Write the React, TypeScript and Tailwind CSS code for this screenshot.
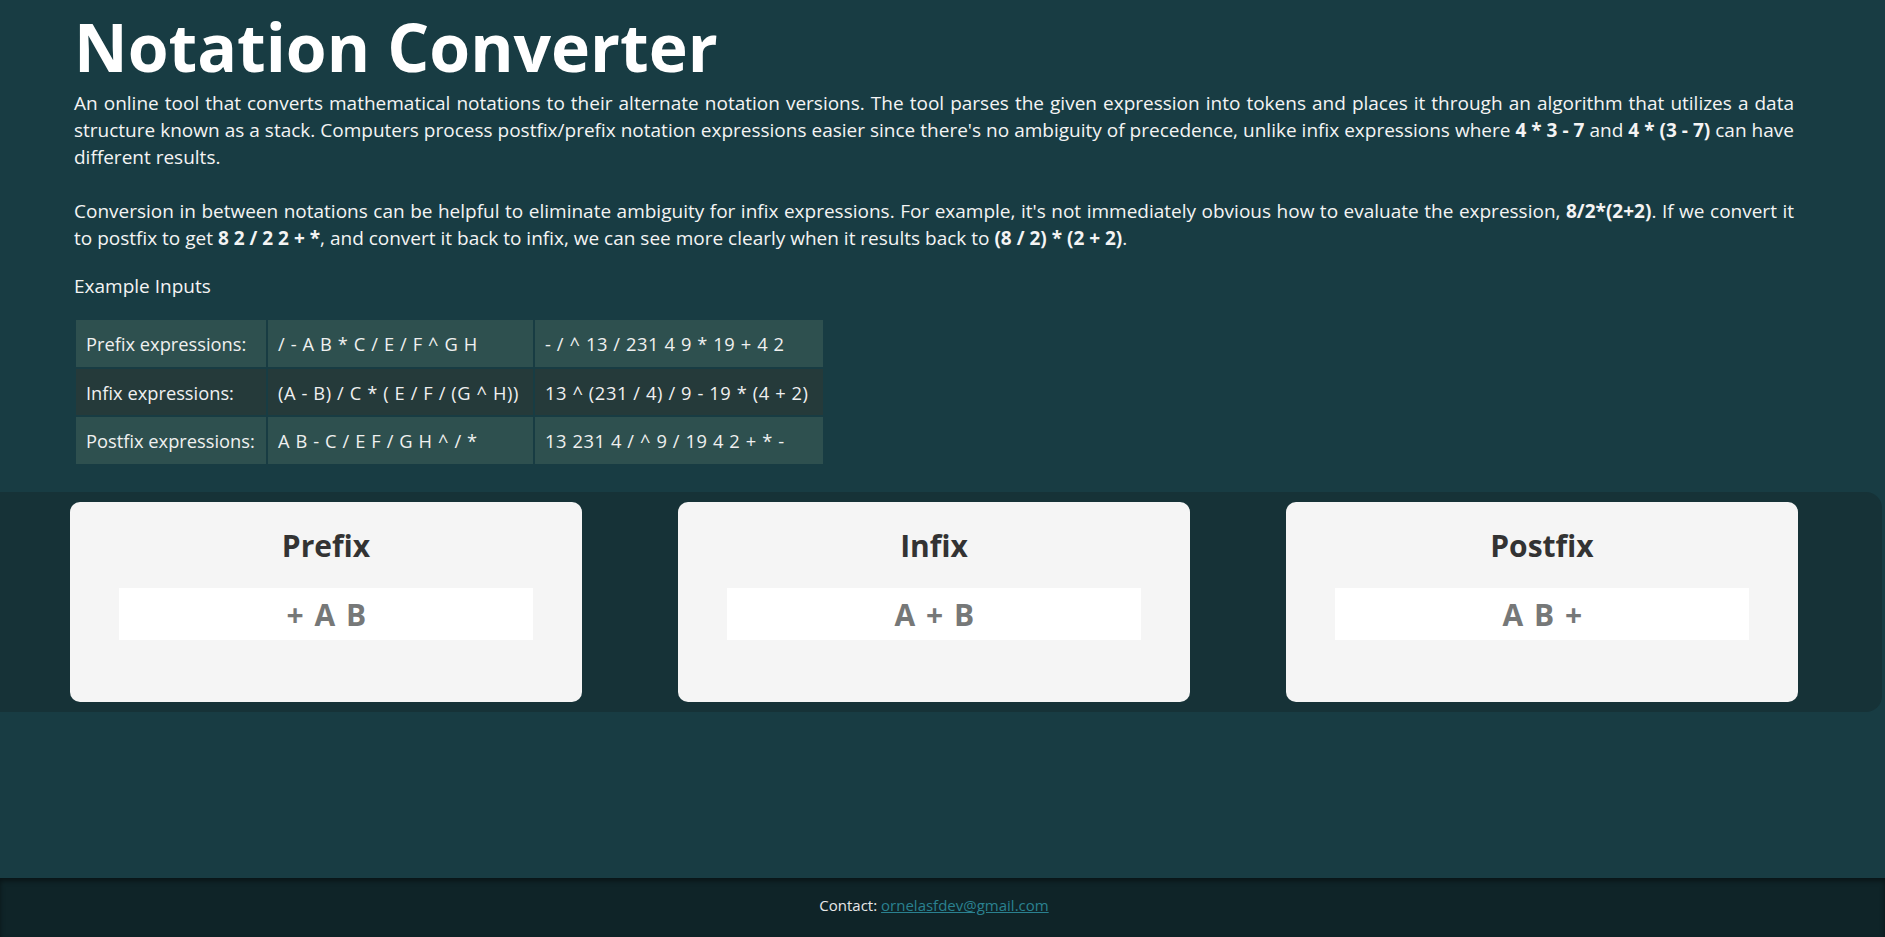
import React from "react";

function Line({ children, last = false }: { children: React.ReactNode; last?: boolean }) {
  return (
    <div className={last ? "text-left" : "text-justify [text-align-last:justify]"}>{children}</div>
  );
}

function Card({ title, value }: { title: string; value: string }) {
  return (
    <div className="flex h-[200px] w-[512px] flex-col items-center rounded-[10px] bg-[#f5f5f5] pt-[24px]">
      <h2 className="text-[30px] font-bold leading-[40px] text-[#333333]">{title}</h2>
      <div className="mt-[22px] h-[52px] w-[414px] bg-white pl-[2px] pt-[2px] text-center text-[30px] font-bold leading-[50px] tracking-[1.5px] text-[#767878]">
        {value}
      </div>
    </div>
  );
}

const rows: [string, string, string, string][] = [
  ["Prefix expressions:", "/ - A B * C / E / F ^ G H", "- / ^ 13 / 231 4 9 * 19 + 4 2", "bg-[#2e504f]"],
  ["Infix expressions:", "(A - B) / C * ( E / F / (G ^ H))", "13 ^ (231 / 4) / 9 - 19 * (4 + 2)", "bg-[#253a3a]"],
  ["Postfix expressions:", "A B - C / E F / G H ^ / *", "13 231 4 / ^ 9 / 19 4 2 + * -", "bg-[#2e504f]"],
];

export default function App() {
  return (
    <div className="flex min-h-screen flex-col bg-[#183c43] font-['Open_Sans','Noto_Sans',sans-serif]">
      <main className="flex-1">
        <div className="w-[1794px] pl-[74px] text-[#f4f4f4]">
          <h1 className="pt-[6px] text-[66px] font-bold leading-[80px] text-white">Notation Converter</h1>
          <div className="mt-[4px] text-[19px] leading-[27px]">
            <Line>
              An online tool that converts mathematical notations to their alternate notation versions. The tool parses the given expression into tokens and places it through an algorithm that utilizes a data
            </Line>
            <Line>
              structure known as a stack. Computers process postfix/prefix notation expressions easier since there's no ambiguity of precedence, unlike infix expressions where <b className="font-bold">4 * 3 - 7</b> and <b className="font-bold">4 * (3 - 7)</b> can have
            </Line>
            <Line last>different results.</Line>
            <div className="h-[27px]" />
            <Line>
              Conversion in between notations can be helpful to eliminate ambiguity for infix expressions. For example, it's not immediately obvious how to evaluate the expression, <b className="font-bold">8/2*(2+2)</b>. If we convert it
            </Line>
            <Line last>
              to postfix to get <b className="font-bold">8 2 / 2 2 + *</b>, and convert it back to infix, we can see more clearly when it results back to <b className="font-bold">(8 / 2) * (2 + 2)</b>.
            </Line>
          </div>
          <p className="mt-[21px] text-[19px] leading-[27px]">Example Inputs</p>
          <table className="mt-[18px] border-separate border-spacing-[2px] text-[18.3px] leading-[26.7px] text-[#f0f0f0]">
            <tbody>
              {rows.map(([a, b, c, bg]) => (
                <tr key={a} className={bg}>
                  <td className="w-[190px] whitespace-nowrap px-[10px] pt-[11px] pb-[9px] text-left">{a}</td>
                  <td className="w-[265px] whitespace-nowrap px-[10px] pt-[11px] pb-[9px] text-left tracking-[0.6px]">{b}</td>
                  <td className="w-[288px] whitespace-nowrap px-[10px] pt-[11px] pb-[9px] text-left tracking-[0.6px]">{c}</td>
                </tr>
              ))}
            </tbody>
          </table>
        </div>
        <section className="mt-[26px] flex w-[1882px] gap-[96px] rounded-r-[16px] bg-[#163237] py-[10px] pl-[70px]">
          <Card title="Prefix" value="+ A B" />
          <Card title="Infix" value="A + B" />
          <Card title="Postfix" value="A B +" />
        </section>
      </main>
      <footer className="h-[59px] bg-[#0f2428] pr-[17px] pt-[17px] text-center text-[15px] leading-[20px] text-[#e8e8e8] shadow-[inset_0_3px_5px_rgba(0,0,0,0.45)]">
        Contact: <a href="#" className="text-[#2a8190] underline">ornelasfdev@gmail.com</a>
      </footer>
    </div>
  );
}
